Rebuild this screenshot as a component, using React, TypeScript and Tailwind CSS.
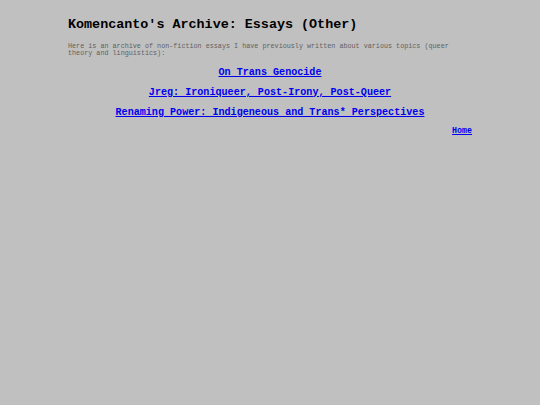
export default function App() {
  return (
    <div className="min-h-[405px] w-full bg-[#c0c0c0]" style={{ fontFamily: '"Liberation Mono", "Courier New", monospace' }}>
      <div className="ml-[68px] w-[404px] pt-[17px]">
        <h1 className="text-[13.4px] font-bold leading-[16px] text-black">Komencanto's Archive: Essays (Other)</h1>
        <p className="mt-[9.5px] text-[6.75px] leading-[7px] text-[#606060]">
          Here is an archive of non-fiction essays I have previously written about various topics (queer theory and linguistics):
        </p>
        <div className="mt-[10px] flex flex-col items-center gap-[8px] text-[10.1px] font-bold leading-[12px]">
          <a href="#" className="text-[#0000ee] underline">On Trans Genocide</a>
          <a href="#" className="text-[#0000ee] underline">Jreg: Ironiqueer, Post-Irony, Post-Queer</a>
          <a href="#" className="text-[#0000ee] underline">Renaming Power: Indigeneous and Trans* Perspectives</a>
        </div>
        <div className="mt-[7.5px] flex justify-end">
          <a href="#" className="text-[8.3px] font-bold leading-[10px] text-[#0000ee] underline">Home</a>
        </div>
      </div>
    </div>
  );
}
